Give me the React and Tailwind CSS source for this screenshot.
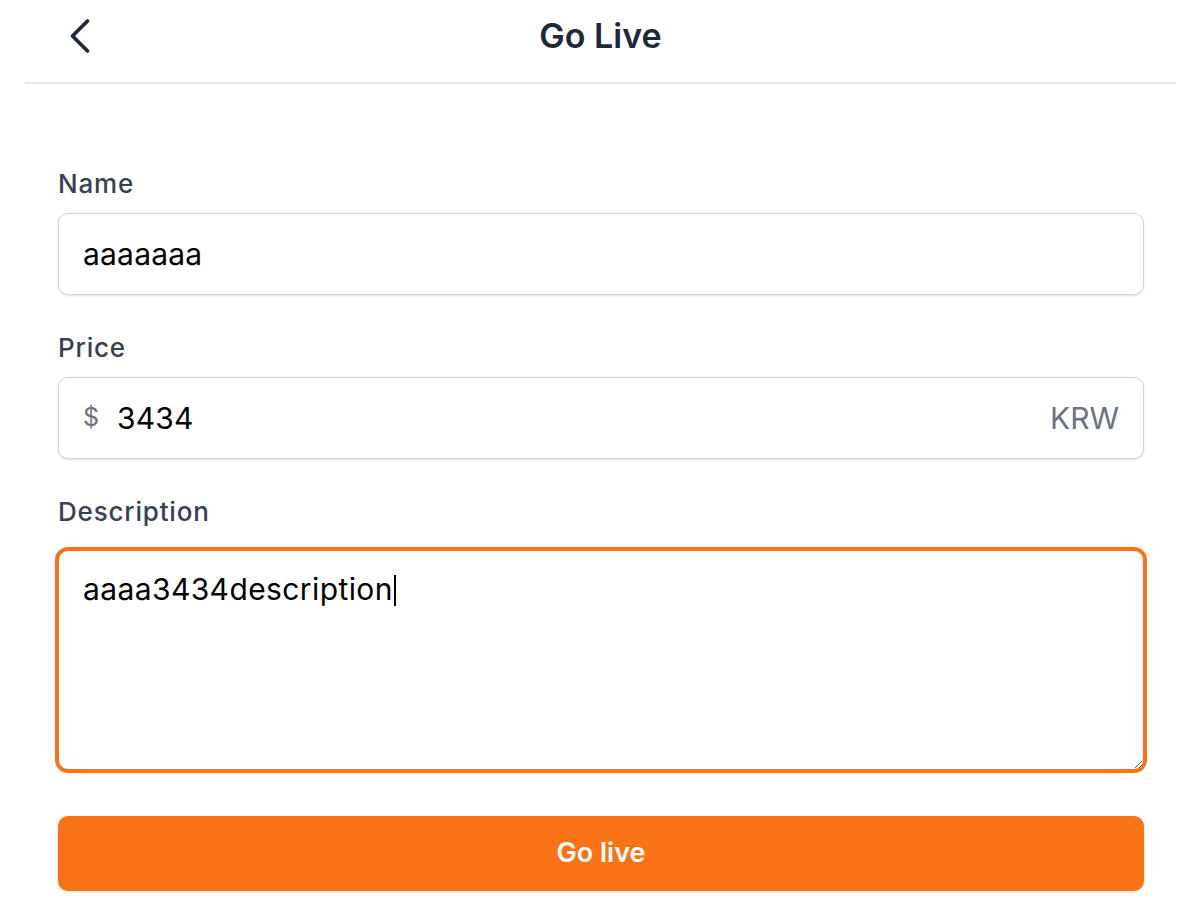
import React from "react";

export default function App() {
  return (
    <div
      className="min-h-screen bg-white pl-[25px] pr-[18px]"
      style={{ fontFamily: "Inter, 'Noto Sans', sans-serif" }}
    >
      <header className="border-b-2 border-[#e5e7eb] pb-[11px]">
        <div className="grid h-[71px] grid-cols-[1fr_auto_1fr] items-center">
          <div className="pl-[44px]">
            <svg width="22" height="36" viewBox="0 0 22 36" fill="none" className="block">
              <path
                d="M18.5 3 L3.5 18 L18.5 33"
                stroke="#1f2937"
                strokeWidth="3.7"
                strokeLinecap="round"
                strokeLinejoin="round"
              />
            </svg>
          </div>
          <h1 className="text-[34px] leading-[40px] font-semibold text-[#1f2937]">Go Live</h1>
          <div />
        </div>
      </header>

      <form className="pl-[33px] pr-[32px] pt-[84px]">
        <label className="mb-[13px] block text-[26px] leading-[32px] font-medium tracking-[0.8px] text-[#374151]">
          Name
        </label>
        <div className="flex h-[82px] items-center rounded-[10px] border border-[#d1d5db] bg-white px-6 shadow-sm">
          <span className="text-[30px] tracking-[0.2px] text-black">aaaaaaa</span>
        </div>

        <label className="mt-[37px] mb-[13px] block text-[26px] leading-[32px] font-medium tracking-[0.8px] text-[#374151]">
          Price
        </label>
        <div className="flex h-[82px] items-center rounded-[10px] border border-[#d1d5db] bg-white px-6 shadow-sm">
          <span className="text-[25px] text-[#6b7280]">$</span>
          <span className="ml-[18px] flex-1 text-[30px] tracking-[0.2px] text-black">3434</span>
          <span className="text-[30px] text-[#6b7280]">KRW</span>
        </div>

        <label className="mt-[37px] mb-[22px] block text-[26px] leading-[32px] font-medium tracking-[0.8px] text-[#374151]">
          Description
        </label>
        <div className="h-[220px] resize-y overflow-auto rounded-[10px] border border-[#f97316] bg-white px-6 py-4 ring-[3px] ring-[#f97316]">
          <span className="text-[30px] leading-[45px] tracking-[0.4px] text-black">aaaa3434description</span>
          <span className="ml-[1px] inline-block h-[31px] w-[2px] bg-black align-[-6px]" />
        </div>

        <button
          type="button"
          className="mt-[46px] flex h-[75px] w-full items-center justify-center rounded-[10px] bg-[#f97316] text-[27px] font-semibold text-white shadow-sm"
        >
          Go live
        </button>
      </form>
    </div>
  );
}
